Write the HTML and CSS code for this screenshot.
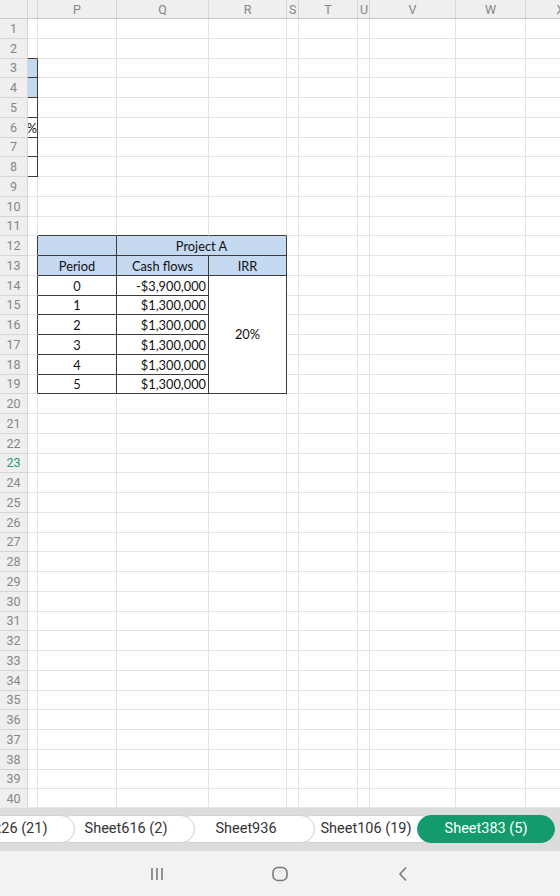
FILE: index.html
```html
<!DOCTYPE html>
<html lang="en">
  <head>
    <meta name="viewport" content="width=device-width, initial-scale=1.0" />
    <title>Sheet383 (5)</title>
    <link rel="stylesheet" href="styles.css">
  </head>
  <body>
    <div class="app">
      <div class="sheet-view">
        <table class="sheet">
          <colgroup>
            <col class="c-hdr"><col class="c-o"><col class="c-p"><col class="c-q"><col class="c-r">
            <col class="c-s"><col class="c-t"><col class="c-u"><col class="c-v"><col class="c-w"><col class="c-x">
          </colgroup>
          <thead>
            <tr class="head">
              <th class="corner"></th>
              <th></th><th>P</th><th>Q</th><th>R</th><th>S</th><th>T</th><th>U</th><th>V</th><th>W</th><th>X</th>
            </tr>
          </thead>
          <tbody class="rows"></tbody>
        </table>
      </div>

      <div class="tabbar">
        <div class="tabs">
          <div class="tab">Sheet26 (21)</div>
          <div class="tab">Sheet616 (2)</div>
          <div class="tab">Sheet936</div>
          <div class="tab">Sheet106 (19)</div>
          <div class="tab active">Sheet383 (5)</div>
        </div>
      </div>

      <div class="navbar">
        <span class="nav-btn">
          <svg width="16" height="16" viewBox="0 0 16 16"><path d="M3 2v12M8 2v12M13 2v12" stroke="#7a7a7a" stroke-width="1.6" fill="none"/></svg>
        </span>
        <span class="nav-btn">
          <svg width="18" height="16" viewBox="0 0 18 16"><rect x="2" y="1.5" width="14" height="13" rx="5" stroke="#7a7a7a" stroke-width="1.6" fill="none"/></svg>
        </span>
        <span class="nav-btn">
          <svg width="12" height="16" viewBox="0 0 12 16"><path d="M9 1.5L3 8l6 6.5" stroke="#7a7a7a" stroke-width="1.6" fill="none"/></svg>
        </span>
      </div>
    </div>

    <script>
      document.addEventListener("DOMContentLoaded", function() {
        const letters = ["O", "P", "Q", "R", "S", "T", "U", "V", "W", "X"];
        const activeRow = 23;

        const money = v => (v < 0 ? "-" : "") + "$" + Math.abs(v).toLocaleString("en-US");

        const cells = {
          O6: { text: "5%", cls: "clip-left" },
          P13: { text: "Period", cls: "center" },
          Q12: { text: "Project A", cls: "center", span: 2 },
          Q13: { text: "Cash flows", cls: "center" },
          R13: { text: "IRR", cls: "center" },
          R14: { text: "20%", cls: "center middle", rows: 6 }
        };
        const flows = [-3900000, 1300000, 1300000, 1300000, 1300000, 1300000];
        flows.forEach((v, i) => {
          cells["P" + (14 + i)] = { text: String(i), cls: "center" };
          cells["Q" + (14 + i)] = { text: money(v), cls: "right" };
        });

        const covered = new Set(["R12", "R15", "R16", "R17", "R18", "R19"]);
        const blue = new Set(["O3", "O4", "P12", "Q12", "P13", "Q13", "R13"]);
        const darkBox = new Set();
        for (let r = 3; r <= 8; r++) darkBox.add("O" + r);
        for (let r = 12; r <= 19; r++) ["P", "Q", "R"].forEach(c => darkBox.add(c + r));
        const darkBottom = new Set(["O2", "P11", "Q11", "R11"]);
        const darkRight = new Set();
        for (let r = 12; r <= 19; r++) darkRight.add("O" + r);

        const body = document.querySelector(".rows");
        for (let r = 1; r <= 40; r++) {
          const tr = document.createElement("tr");
          const th = document.createElement("th");
          th.textContent = r;
          if (r === activeRow) th.className = "active";
          tr.appendChild(th);

          for (const c of letters) {
            const ref = c + r;
            if (covered.has(ref)) continue;
            const td = document.createElement("td");
            const data = cells[ref];
            const cls = [];
            if (data) {
              td.textContent = data.text;
              cls.push(...data.cls.split(" "));
              if (data.span) td.colSpan = data.span;
              if (data.rows) td.rowSpan = data.rows;
            }
            if (blue.has(ref)) cls.push("fill");
            if (darkBox.has(ref)) cls.push("box");
            if (darkBottom.has(ref)) cls.push("edge-b");
            if (darkRight.has(ref)) cls.push("edge-r");
            if (cls.length) td.className = cls.join(" ");
            tr.appendChild(td);
          }
          body.appendChild(tr);
        }
      });
    </script>
  </body>
</html>
```

FILE: styles.css
```css
* {
  margin: 0;
  padding: 0;
  box-sizing: border-box;
}
body {
  width: 560px;
  height: 896px;
  overflow: hidden;
  background: #fff;
  font-family: Roboto, "Liberation Sans", sans-serif;
}
.app {
  display: flex;
  flex-direction: column;
  height: 896px;
}
.sheet-view {
  height: 807px;
  overflow: hidden;
  flex: none;
}

/* grid */
.sheet {
  border-collapse: separate;
  border-spacing: 0;
  table-layout: fixed;
  width: 596px;
}
.c-hdr { width: 28px; }
.c-o { width: 10px; }
.c-p { width: 79px; }
.c-q { width: 92px; }
.c-r { width: 78px; }
.c-s { width: 12px; }
.c-t { width: 59px; }
.c-u { width: 12px; }
.c-v { width: 86px; }
.c-w { width: 70px; }
.c-x { width: 70px; }
.sheet tr {
  height: 19.75px;
}
.sheet tr.head {
  height: 19px;
}
.sheet th,
.sheet td {
  border-right: 1px solid #e3e3e3;
  border-bottom: 1px solid #e3e3e3;
  overflow: hidden;
  white-space: nowrap;
  padding: 0 2px;
}
.sheet th {
  background: #efefef;
  color: #868686;
  font: 12.5px Roboto, sans-serif;
  text-align: center;
  border-color: #d5d5d5;
}
.sheet thead th {
  border-bottom-color: #c9c9c9;
}
.sheet th.active {
  color: #1e9e6e;
}
.sheet td {
  font: 12.8px Lato, "Liberation Sans", sans-serif;
  color: #111;
  line-height: 15px;
  vertical-align: bottom;
  padding-bottom: 1px;
}
.sheet td.center { text-align: center; }
.sheet td.right { text-align: right; }
.sheet td.clip-left {
  direction: rtl;
  text-align: right;
  padding: 0 1px 1px 0;
}
.sheet td.middle { vertical-align: middle; }
.sheet td.fill { background: #c5d9f1; }
.sheet td.box {
  border-right-color: #3c3c3c;
  border-bottom-color: #3c3c3c;
}
.sheet td.edge-b { border-bottom-color: #3c3c3c; }
.sheet td.edge-r { border-right-color: #3c3c3c; }

/* sheet tabs */
.tabbar {
  background: #dcdcdc;
  border-top: 1px solid #e8e8e8;
  padding: 7px 0 8px;
  flex: none;
}
.tabs {
  display: flex;
  height: 28px;
}
.tab {
  position: relative;
  flex: 0 0 138px;
  margin-right: -18px;
  height: 28px;
  border: 1px solid #d2d2d2;
  border-radius: 14px;
  background: #fff;
  color: #333;
  font-size: 14.5px;
  line-height: 26px;
  text-align: center;
  white-space: nowrap;
}
.tab:first-child { margin-left: -63px; }
.tab:nth-child(1) { z-index: 5; }
.tab:nth-child(2) { z-index: 4; }
.tab:nth-child(3) { z-index: 3; }
.tab:nth-child(4) { z-index: 2; }
.tab.active {
  z-index: 6;
  background: #139b6e;
  border-color: #139b6e;
  color: #fff;
}

/* system nav */
.navbar {
  flex: 1;
  background: #f2f2f2;
  display: flex;
  align-items: center;
  justify-content: center;
  gap: 83px;
}
.nav-btn {
  width: 40px;
  height: 24px;
  display: flex;
  align-items: center;
  justify-content: center;
}
```
